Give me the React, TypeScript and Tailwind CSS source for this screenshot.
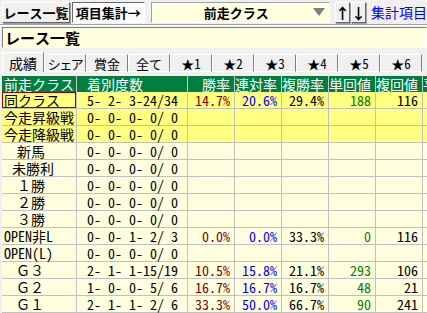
import React from "react";

type Row = {
  name: string;
  pl: number;
  d: string;
  w?: string;
  r?: string;
  f?: string;
  t?: string;
  fk?: string;
  hl?: boolean;
  sel?: boolean;
};

const zero = "0- 0- 0- 0/ 0";

const rows: Row[] = [
  { name: "同クラス", pl: 2, d: "5- 2- 3-24/34", w: "14.7%", r: "20.6%", f: "29.4%", t: "188", fk: "116", hl: true, sel: true },
  { name: "今走昇級戦", pl: 2, d: zero, hl: true },
  { name: "今走降級戦", pl: 2, d: zero, hl: true },
  { name: "新馬", pl: 15, d: zero },
  { name: "未勝利", pl: 10, d: zero },
  { name: "１勝", pl: 15, d: zero },
  { name: "２勝", pl: 15, d: zero },
  { name: "３勝", pl: 15, d: zero },
  { name: "OPEN非L", pl: 2, d: "0- 0- 1- 2/ 3", w: "0.0%", r: "0.0%", f: "33.3%", t: "0", fk: "116" },
  { name: "OPEN(L)", pl: 2, d: zero },
  { name: "Ｇ３", pl: 14, d: "2- 1- 1-15/19", w: "10.5%", r: "15.8%", f: "21.1%", t: "293", fk: "106" },
  { name: "Ｇ２", pl: 14, d: "1- 0- 0- 5/ 6", w: "16.7%", r: "16.7%", f: "16.7%", t: "48", fk: "21" },
  { name: "Ｇ１", pl: 14, d: "2- 1- 1- 2/ 6", w: "33.3%", r: "50.0%", f: "66.7%", t: "90", fk: "241" },
];

const tabs = ["シェア", "賞金", "全て", "★1", "★2", "★3", "★4", "★5", "★6"];

const font = { fontFamily: '"Noto Sans Mono CJK JP", "Noto Sans CJK JP", "Liberation Mono", monospace' };

const grid = "grid grid-cols-[75px_111px_47px_47px_47px_47px_47px_47px_47px]";

function Btn({ children, pressed, className }: { children: React.ReactNode; pressed?: boolean; className?: string }) {
  return (
    <div
      className={
        "flex h-[21px] items-center justify-center whitespace-nowrap text-[13px] font-bold text-black " +
        (pressed
          ? "border border-t-[#696969] border-l-[#696969] border-r-white border-b-white bg-[#fafafa] "
          : "border border-t-white border-l-white border-r-[#696969] border-b-[#696969] bg-[#f0f0f0] shadow-[1px_1px_0_#a0a0a0] ") +
        (className ?? "")
      }
    >
      {children}
    </div>
  );
}

export default function App() {
  return (
    <div className="h-[313px] w-[427px] overflow-hidden bg-[#f0f0f0] leading-none" style={font}>
      {/* top toolbar */}
      <div className="flex h-[24px] items-center gap-[2px] pl-[2px]">
        <Btn className="w-[72px]">レース一覧</Btn>
        <Btn pressed className="w-[77px]">項目集計→</Btn>
        <div className="ml-[4px] flex h-[21px] w-[190px] items-center border border-t-[#a0a0a0] border-l-[#a0a0a0] border-r-white border-b-white bg-[#ffffe0]">
          <span className="flex-1 pl-[8px] text-center text-[13px] font-bold">前走クラス</span>
          <span className="mr-[4px] h-0 w-0 border-x-[6px] border-t-[8px] border-x-transparent border-t-[#808080]" />
        </div>
        <Btn className="ml-[3px] w-[15px] text-[15px]">↑</Btn>
        <Btn className="-ml-[1px] w-[15px] text-[15px]">↓</Btn>
        <span className="ml-[3px] whitespace-nowrap text-[14px] text-[#0000ff]">集計項目</span>
      </div>
      <div className="h-[1px] bg-[#a0a0a0]" />
      <div className="h-[1px] bg-white" />

      {/* title */}
      <div className="ml-[2px] mt-[1px] flex h-[21px] items-center border border-t-[#808080] border-l-[#808080] border-r-white border-b-white bg-[#ffffe0] pl-[2px] text-[15px] font-bold">
        レース一覧
      </div>

      {/* tabs */}
      <div className="mt-[4px] flex h-[20px] items-end pl-[2px]">
        <div className="flex h-[20px] w-[42px] items-center justify-center whitespace-nowrap border-l border-t border-r border-l-white border-t-white border-r-[#808080] bg-[#f0f0f0] text-[14px]">
          成績
        </div>
        {tabs.map((t) => (
          <div
            key={t}
            className={
              "flex h-[18px] w-[42px] items-center justify-center whitespace-nowrap border-l border-t border-r border-b border-l-white border-t-white border-r-[#808080] border-b-white bg-[#f0f0f0] text-[13px] " +
              (t === "シェア" ? "tracking-[-1.5px]" : "")
            }
          >
            {t}
          </div>
        ))}
      </div>

      {/* grid */}
      <div className="mt-[4px] pl-[2px]">
        <div className={grid + " h-[16px] bg-[#007f40] text-[14px] text-white"}>
          <div className="flex items-center whitespace-pre border-r border-[#c8c8c8] pl-[2px]">前走クラス</div>
          <div className="flex items-center border-r border-[#c8c8c8] pl-[10px]">着別度数</div>
          {["勝率", "連対率", "複勝率", "単回値", "複回値", "平均人"].map((h) => (
            <div key={h} className="flex items-center justify-end whitespace-nowrap border-r border-[#c8c8c8] pr-[4px]">
              {h}
            </div>
          ))}
        </div>
        {rows.map((row) => {
          const bg = row.hl ? "bg-[#ffff80]" : "bg-[#ffffe0]";
          const cell = "flex h-[17px] items-center whitespace-pre border-r border-b border-[#c0c0c0] text-[14px] ";
          return (
            <div key={row.name} className={grid + " " + bg}>
              <div
                className={cell + (row.sel ? "shadow-[inset_0_0_0_1px_#9a0000]" : "")}
                style={{ paddingLeft: row.pl }}
              >
                {row.name}
              </div>
              <div className={cell + "pl-[10px]"}>{row.d}</div>
              <div className={cell + "justify-end pr-[4px] text-[#800000]"}>{row.w}</div>
              <div className={cell + "justify-end pr-[4px] text-[#0000ff]"}>{row.r}</div>
              <div className={cell + "justify-end pr-[4px] text-black"}>{row.f}</div>
              <div className={cell + "justify-end pr-[4px] text-[#008000]"}>{row.t}</div>
              <div className={cell + "justify-end pr-[4px] text-black"}>{row.fk}</div>
              <div className={cell} />
            </div>
          );
        })}
      </div>
    </div>
  );
}
